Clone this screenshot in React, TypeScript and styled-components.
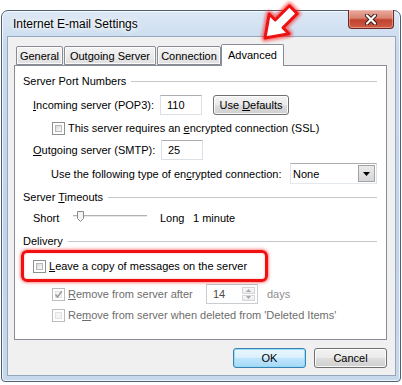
import React from "react";
import styled, { createGlobalStyle } from "styled-components";

const Global = createGlobalStyle`
  html, body { margin: 0; padding: 0; background: #ffffff; }
  body {
    font-family: "Liberation Sans", Arial, sans-serif;
    font-size: 11px;
    color: #000;
  }
  #root { width: 402px; height: 385px; overflow: hidden; }
  * { box-sizing: border-box; }
`;

const Page = styled.div`
  position: relative;
  width: 402px;
  height: 385px;
  padding: 10px 1px 0 1px;
`;

const Window = styled.div`
  width: 400px;
  height: 372px;
  border: 1px solid #4f5f73;
  border-radius: 7px 7px 4px 4px;
  background: linear-gradient(180deg, #dce8f5 0%, #c8daee 35px, #bfd3ea 60%, #c6d8ec 100%);
  box-shadow: inset 0 0 0 1px rgba(255, 255, 255, 0.75);
  display: flex;
  flex-direction: column;
  padding: 0 4px 5px 5px;
`;

const TitleBar = styled.div`
  height: 25px;
  display: flex;
  align-items: center;
  justify-content: space-between;
`;

const Title = styled.span`
  padding-left: 6px;
  font-size: 12px;
  color: #000;
  text-shadow: 0 0 6px #fff, 0 0 10px #fff, 0 0 3px #fff;
`;

const CloseButton = styled.div`
  align-self: flex-start;
  margin-top: -1px;
  margin-right: 2px;
  width: 46px;
  height: 19px;
  border: 1px solid #6e2a22;
  border-top: none;
  border-radius: 0 0 4px 4px;
  background: linear-gradient(180deg, #e8aca2 0%, #d9826f 45%, #c0412f 55%, #cf5d45 100%);
  box-shadow: inset 0 0 0 1px rgba(255, 210, 200, 0.45);
  display: flex;
  align-items: center;
  justify-content: center;
`;

const Client = styled.div`
  flex: 1;
  background: #f0f0f0;
  border: 1px solid #95a7bc;
  padding: 8px 8px 7px 6px;
  display: flex;
  flex-direction: column;
`;

const TabStrip = styled.div`
  height: 21px;
  margin-bottom: -1px;
  display: flex;
  align-items: flex-end;
  position: relative;
  z-index: 1;
`;

const Tab = styled.div<{ $w: number; $ml: number; $active?: boolean }>`
  width: ${(p) => p.$w}px;
  margin-left: ${(p) => p.$ml}px;
  height: ${(p) => (p.$active ? 22 : 19)}px;
  margin-bottom: ${(p) => (p.$active ? 0 : 1)}px;
  border: 1px solid #898c95;
  border-bottom: ${(p) => (p.$active ? "none" : "1px solid #898c95")};
  border-radius: 2px 2px 0 0;
  background: ${(p) =>
    p.$active ? "#ffffff" : "linear-gradient(180deg, #f4f4f4 0%, #ebebeb 50%, #dfdfdf 100%)"};
  box-shadow: ${(p) => (p.$active ? "none" : "inset 0 0 0 1px rgba(255,255,255,0.8)")};
  display: flex;
  align-items: center;
  justify-content: center;
  padding-bottom: ${(p) => (p.$active ? 1 : 0)}px;
  white-space: nowrap;
`;

const Panel = styled.div`
  height: 275px;
  background: #ffffff;
  border: 1px solid #898c95;
  padding: 7px 9px 0 8px;
  display: flex;
  flex-direction: column;
`;

const GroupHeader = styled.div<{ $mt: number }>`
  margin-top: ${(p) => p.$mt}px;
  height: 16px;
  display: flex;
  align-items: center;
  gap: 5px;
  white-space: nowrap;
`;

const GroupLine = styled.div`
  flex: 1;
  height: 1px;
  background: #c4c8cc;
  box-shadow: 0 1px 0 #ffffff;
`;

const Row = styled.div<{ $mt: number; $h: number; $indent: number }>`
  margin-top: ${(p) => p.$mt}px;
  height: ${(p) => p.$h}px;
  padding-left: ${(p) => p.$indent}px;
  display: flex;
  align-items: center;
  white-space: nowrap;
`;

const Label = styled.span<{ $w?: number; $tone?: "normal" | "disabled" | "faint"; $ml?: number }>`
  display: inline-block;
  ${(p) => (p.$w ? `width: ${p.$w}px;` : "")}
  margin-left: ${(p) => p.$ml ?? 0}px;
  color: ${(p) => (p.$tone === "disabled" ? "#6d6d6d" : p.$tone === "faint" ? "#8e8e8e" : "#000")};
`;

const Key = styled.span`
  text-decoration: underline;
  text-underline-offset: 1px;
`;

const TextBox = styled.div<{ $w: number; $h: number; $disabled?: boolean }>`
  width: ${(p) => p.$w}px;
  height: ${(p) => p.$h}px;
  background: #ffffff;
  border: 1px solid ${(p) => (p.$disabled ? "#c9cdd2" : "#dbdfe6")};
  border-top-color: ${(p) => (p.$disabled ? "#b8bcc2" : "#abadb3")};
  display: flex;
  align-items: center;
  padding-left: 6px;
  color: ${(p) => (p.$disabled ? "#4a4a4a" : "#000")};
  position: relative;
`;

const PushButton = styled.div<{ $w: number; $ml?: number; $default?: boolean }>`
  width: ${(p) => p.$w}px;
  height: 20px;
  margin-left: ${(p) => p.$ml ?? 0}px;
  border: 1px solid ${(p) => (p.$default ? "#3c7fb1" : "#707070")};
  border-radius: 3px;
  background: ${(p) =>
    p.$default
      ? "linear-gradient(180deg, #eaf6fd 0%, #d9f0fc 48%, #bee6fd 52%, #a7d9f5 100%)"
      : "linear-gradient(180deg, #f2f2f2 0%, #ebebeb 48%, #dddddd 52%, #cfcfcf 100%)"};
  box-shadow: inset 0 0 0 1px ${(p) => (p.$default ? "rgba(140,220,250,0.9)" : "rgba(255,255,255,0.85)")};
  display: flex;
  align-items: center;
  justify-content: center;
  color: #000;
`;

const ButtonRow = styled.div`
  margin-top: 8px;
  display: flex;
  justify-content: flex-end;
  gap: 8px;
`;

const Box = styled.div<{ $disabled?: boolean }>`
  width: 13px;
  height: 13px;
  flex: none;
  border: 1px solid ${(p) => (p.$disabled ? "#bcbcbc" : "#8e8f8f")};
  background: #ffffff;
  padding: 2px;
  margin-right: 2px;
  position: relative;
`;

const BoxInner = styled.div<{ $disabled?: boolean }>`
  width: 100%;
  height: 100%;
  border: 1px solid ${(p) => (p.$disabled ? "#e2e2e2" : "#b8b8b8")};
  background: ${(p) =>
    p.$disabled ? "#f4f4f4" : "linear-gradient(135deg, #d8d8d8 0%, #eeeeee 60%, #fbfbfb 100%)"};
`;

const CheckMark = styled.svg`
  position: absolute;
  left: 1px;
  top: 1px;
`;

const Check: React.FC<{ disabled?: boolean; checked?: boolean }> = ({ disabled, checked }) => (
  <Box $disabled={disabled}>
    <BoxInner $disabled={disabled} />
    {checked && (
      <CheckMark width="9" height="9" viewBox="0 0 9 9">
        <path d="M1.5 4.5 L3.5 7 L7.8 1.2" fill="none" stroke="#9a9a9a" strokeWidth="1.5" />
      </CheckMark>
    )}
  </Box>
);

const Select = styled.div`
  margin-left: auto;
  width: 87px;
  height: 21px;
  border: 1px solid #abadb3;
  border-color: #abadb3 #dbdfe6 #e3e9ef #e2e3ea;
  background: #fff;
  display: flex;
  align-items: center;
  padding: 0 1px 0 2px;
`;

const SelectText = styled.span`
  flex: 1;
`;

const SelectArrow = styled.div`
  width: 17px;
  height: 17px;
  border: 1px solid #a3a3a3;
  background: linear-gradient(180deg, #eaeaea 0%, #d6d6d6 100%);
  display: flex;
  align-items: center;
  justify-content: center;
`;

const Spinner = styled(TextBox)`
  padding-left: 6px;
`;

const SpinButtons = styled.div`
  position: absolute;
  right: 2px;
  top: 2px;
  bottom: 2px;
  width: 13px;
  display: flex;
  flex-direction: column;
  gap: 1px;
`;

const SpinHalf = styled.div`
  flex: 1;
  border: 1px solid #d4d6d9;
  background: linear-gradient(180deg, #f7f7f7, #ececec);
  display: flex;
  align-items: center;
  justify-content: center;
`;

const Highlight = styled.div`
  margin-top: 1px;
  margin-left: -2px;
  width: 247px;
  height: 32px;
  border: 3px solid #ee1111;
  border-radius: 6px;
  box-shadow: 0 0 3px 1px rgba(255, 40, 40, 0.55), inset 0 0 2px rgba(255, 40, 40, 0.45);
  display: flex;
  align-items: center;
  padding-left: 9px;
  white-space: nowrap;
`;

const SliderSvg = styled.svg`
  flex: none;
`;

const Overlay = styled.svg`
  position: absolute;
  left: 0;
  top: 0;
  pointer-events: none;
`;

export default function App() {
  return (
    <Page>
      <Global />
      <Window>
        <TitleBar>
          <Title>Internet E-mail Settings</Title>
          <CloseButton>
            <svg width="14" height="11" viewBox="0 0 14 11">
              <path d="M3 1.5 L11 9.5 M11 1.5 L3 9.5" stroke="#3a1a16" strokeWidth="4" strokeLinecap="round" />
              <path d="M3 1.5 L11 9.5 M11 1.5 L3 9.5" stroke="#ffffff" strokeWidth="2.2" strokeLinecap="round" />
            </svg>
          </CloseButton>
        </TitleBar>
        <Client>
          <TabStrip>
            <Tab $w={47} $ml={2}>General</Tab>
            <Tab $w={92} $ml={1}>Outgoing Server</Tab>
            <Tab $w={64} $ml={1}>Connection</Tab>
            <Tab $w={63} $ml={0} $active>Advanced</Tab>
          </TabStrip>
          <Panel>
            <GroupHeader $mt={0}>
              <span>Server Port Numbers</span>
              <GroupLine />
            </GroupHeader>
            <Row $mt={6} $h={20} $indent={10}>
              <Label $w={127}>
                <Key>I</Key>ncoming server (POP3):
              </Label>
              <TextBox $w={42} $h={20}>110</TextBox>
              <PushButton $w={76} $ml={11}>
                Use&nbsp;<Key>D</Key>efaults
              </PushButton>
            </Row>
            <Row $mt={5} $h={16} $indent={29}>
              <Check />
              <Label $ml={1}>
                This server requires an <Key>e</Key>ncrypted connection (SSL)
              </Label>
            </Row>
            <Row $mt={4} $h={20} $indent={10}>
              <Label $w={128}>
                <Key>O</Key>utgoing server (SMTP):
              </Label>
              <TextBox $w={42} $h={20}>25</TextBox>
            </Row>
            <Row $mt={3} $h={21} $indent={28}>
              <Label>
                Use the following type of en<Key>c</Key>rypted connection:
              </Label>
              <Select>
                <SelectText>None</SelectText>
                <SelectArrow>
                  <svg width="7" height="4" viewBox="0 0 7 4">
                    <path d="M0 0 H7 L3.5 4 Z" fill="#000" />
                  </svg>
                </SelectArrow>
              </Select>
            </Row>
            <GroupHeader $mt={5}>
              <span>
                Server <Key>T</Key>imeouts
              </span>
              <GroupLine />
            </GroupHeader>
            <Row $mt={5} $h={16} $indent={10}>
              <Label $w={40}>Short</Label>
              <SliderSvg width="74" height="16" viewBox="0 0 74 16">
                <line x1="0" y1="5.5" x2="74" y2="5.5" stroke="#b2b2b2" />
                <line x1="0" y1="6.5" x2="74" y2="6.5" stroke="#e8e8e8" />
                <path d="M4.5 1.5 H10.5 V8.5 L7.5 11.5 L4.5 8.5 Z" fill="#f4f4f4" stroke="#8a8a8a" />
              </SliderSvg>
              <Label $w={33} $ml={13}>Long</Label>
              <Label>1 minute</Label>
            </Row>
            <GroupHeader $mt={7}>
              <span>Delivery</span>
              <GroupLine />
            </GroupHeader>
            <Highlight>
              <Check />
              <Label $ml={1}>
                <Key>L</Key>eave a copy of messages on the server
              </Label>
            </Highlight>
            <Row $mt={2} $h={20} $indent={29}>
              <Check disabled checked />
              <Label $w={138} $ml={1} $tone="disabled">
                <Key>R</Key>emove from server after
              </Label>
              <Spinner $w={52} $h={20} $disabled>
                14
                <SpinButtons>
                  <SpinHalf>
                    <svg width="5" height="3" viewBox="0 0 5 3">
                      <path d="M0 3 H5 L2.5 0 Z" fill="#a8a8a8" />
                    </svg>
                  </SpinHalf>
                  <SpinHalf>
                    <svg width="5" height="3" viewBox="0 0 5 3">
                      <path d="M0 0 H5 L2.5 3 Z" fill="#a8a8a8" />
                    </svg>
                  </SpinHalf>
                </SpinButtons>
              </Spinner>
              <Label $ml={9} $tone="faint">days</Label>
            </Row>
            <Row $mt={3} $h={16} $indent={29}>
              <Check disabled />
              <Label $ml={1} $tone="disabled">
                Re<Key>m</Key>ove from server when deleted from 'Deleted Items'
              </Label>
            </Row>
          </Panel>
          <ButtonRow>
            <PushButton $w={73} $default>OK</PushButton>
            <PushButton $w={73}>Cancel</PushButton>
          </ButtonRow>
        </Client>
      </Window>
      <Overlay width="402" height="385" viewBox="0 0 402 385">
        <defs>
          <filter id="glow" x="-30%" y="-30%" width="160%" height="160%">
            <feGaussianBlur stdDeviation="1.6" />
          </filter>
        </defs>
        <polygon
          points="265,38 269.2,14 275.2,20 289.4,5.8 297.2,13.6 283,27.8 289,33.8"
          fill="none"
          stroke="#ff1a1a"
          strokeWidth="7"
          strokeLinejoin="round"
          opacity="0.6"
          filter="url(#glow)"
        />
        <polygon
          points="265,38 269.2,14 275.2,20 289.4,5.8 297.2,13.6 283,27.8 289,33.8"
          fill="#ffffff"
          stroke="#ee1111"
          strokeWidth="3"
          strokeLinejoin="round"
        />
      </Overlay>
    </Page>
  );
}
